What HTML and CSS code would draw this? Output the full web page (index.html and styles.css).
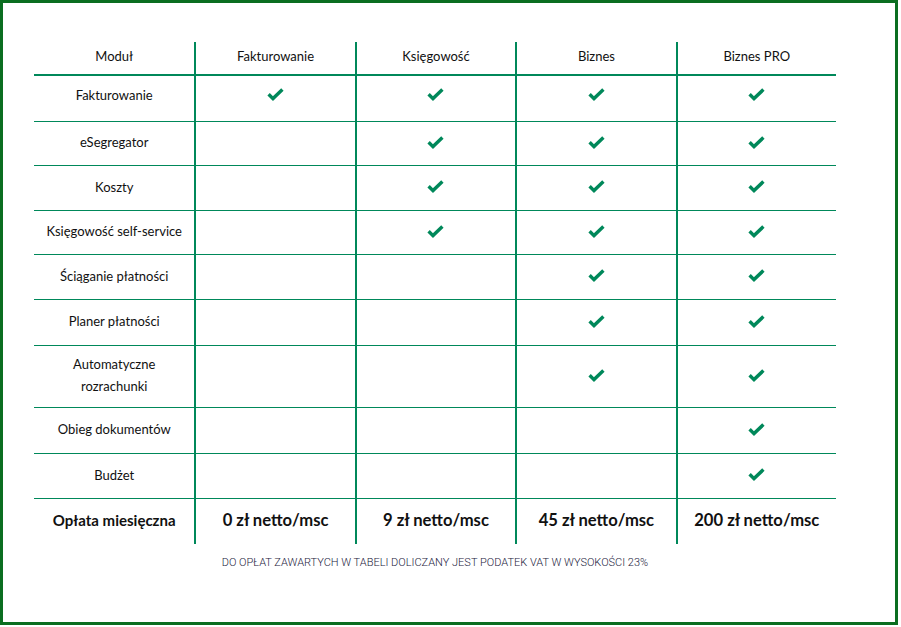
FILE: index.html
```html
<!DOCTYPE html>
<html lang="pl">
<head>
<meta charset="utf-8">
<title>Porównanie pakietów</title>
<link rel="stylesheet" href="styles.css">
</head>
<body>
<div class="frame">
  <div class="grid">
    <div class="cell head">Moduł</div>
    <div class="cell head sep">Fakturowanie</div>
    <div class="cell head sep">Księgowość</div>
    <div class="cell head sep">Biznes</div>
    <div class="cell head sep">Biznes PRO</div>

    <div class="cell r1">Fakturowanie</div>
    <div class="cell r1 sep"><svg class="ck" viewBox="0 0 17 13"><polyline points="1.6,6.2 6,10.6 15.4,1.6"/></svg></div>
    <div class="cell r1 sep"><svg class="ck" viewBox="0 0 17 13"><polyline points="1.6,6.2 6,10.6 15.4,1.6"/></svg></div>
    <div class="cell r1 sep"><svg class="ck" viewBox="0 0 17 13"><polyline points="1.6,6.2 6,10.6 15.4,1.6"/></svg></div>
    <div class="cell r1 sep"><svg class="ck" viewBox="0 0 17 13"><polyline points="1.6,6.2 6,10.6 15.4,1.6"/></svg></div>

    <div class="cell">eSegregator</div>
    <div class="cell sep"></div>
    <div class="cell sep"><svg class="ck" viewBox="0 0 17 13"><polyline points="1.6,6.2 6,10.6 15.4,1.6"/></svg></div>
    <div class="cell sep"><svg class="ck" viewBox="0 0 17 13"><polyline points="1.6,6.2 6,10.6 15.4,1.6"/></svg></div>
    <div class="cell sep"><svg class="ck" viewBox="0 0 17 13"><polyline points="1.6,6.2 6,10.6 15.4,1.6"/></svg></div>

    <div class="cell">Koszty</div>
    <div class="cell sep"></div>
    <div class="cell sep"><svg class="ck" viewBox="0 0 17 13"><polyline points="1.6,6.2 6,10.6 15.4,1.6"/></svg></div>
    <div class="cell sep"><svg class="ck" viewBox="0 0 17 13"><polyline points="1.6,6.2 6,10.6 15.4,1.6"/></svg></div>
    <div class="cell sep"><svg class="ck" viewBox="0 0 17 13"><polyline points="1.6,6.2 6,10.6 15.4,1.6"/></svg></div>

    <div class="cell">Księgowość self-service</div>
    <div class="cell sep"></div>
    <div class="cell sep"><svg class="ck" viewBox="0 0 17 13"><polyline points="1.6,6.2 6,10.6 15.4,1.6"/></svg></div>
    <div class="cell sep"><svg class="ck" viewBox="0 0 17 13"><polyline points="1.6,6.2 6,10.6 15.4,1.6"/></svg></div>
    <div class="cell sep"><svg class="ck" viewBox="0 0 17 13"><polyline points="1.6,6.2 6,10.6 15.4,1.6"/></svg></div>

    <div class="cell">Ściąganie płatności</div>
    <div class="cell sep"></div>
    <div class="cell sep"></div>
    <div class="cell sep"><svg class="ck" viewBox="0 0 17 13"><polyline points="1.6,6.2 6,10.6 15.4,1.6"/></svg></div>
    <div class="cell sep"><svg class="ck" viewBox="0 0 17 13"><polyline points="1.6,6.2 6,10.6 15.4,1.6"/></svg></div>

    <div class="cell">Planer płatności</div>
    <div class="cell sep"></div>
    <div class="cell sep"></div>
    <div class="cell sep"><svg class="ck" viewBox="0 0 17 13"><polyline points="1.6,6.2 6,10.6 15.4,1.6"/></svg></div>
    <div class="cell sep"><svg class="ck" viewBox="0 0 17 13"><polyline points="1.6,6.2 6,10.6 15.4,1.6"/></svg></div>

    <div class="cell">Automatyczne<br>rozrachunki</div>
    <div class="cell sep"></div>
    <div class="cell sep"></div>
    <div class="cell sep"><svg class="ck" viewBox="0 0 17 13"><polyline points="1.6,6.2 6,10.6 15.4,1.6"/></svg></div>
    <div class="cell sep"><svg class="ck" viewBox="0 0 17 13"><polyline points="1.6,6.2 6,10.6 15.4,1.6"/></svg></div>

    <div class="cell">Obieg dokumentów</div>
    <div class="cell sep"></div>
    <div class="cell sep"></div>
    <div class="cell sep"></div>
    <div class="cell sep"><svg class="ck" viewBox="0 0 17 13"><polyline points="1.6,6.2 6,10.6 15.4,1.6"/></svg></div>

    <div class="cell">Budżet</div>
    <div class="cell sep"></div>
    <div class="cell sep"></div>
    <div class="cell sep"></div>
    <div class="cell sep"><svg class="ck" viewBox="0 0 17 13"><polyline points="1.6,6.2 6,10.6 15.4,1.6"/></svg></div>

    <div class="cell foot">Opłata miesięczna</div>
    <div class="cell foot sep price">0 zł netto/msc</div>
    <div class="cell foot sep price">9 zł netto/msc</div>
    <div class="cell foot sep price">45 zł netto/msc</div>
    <div class="cell foot sep price">200 zł netto/msc</div>
  </div>
  <p class="note">DO OPŁAT ZAWARTYCH W TABELI DOLICZANY JEST PODATEK VAT W WYSOKOŚCI 23%</p>
</div>
</body>
</html>
```

FILE: styles.css
```css
html, body {
  margin: 0;
  padding: 0;
  background: #ffffff;
}

.frame {
  box-sizing: border-box;
  width: 898px;
  height: 625px;
  border: 3px solid #0b6e20;
  padding: 39px 0 0 31px;
  font-family: Lato, "Noto Sans", sans-serif;
  color: #111111;
}

.grid {
  width: 802px;
  display: grid;
  grid-template-columns: repeat(5, 1fr);
  grid-template-rows: 34px 46px 44px 45px 44px 45px 46px 62px 46px 45px 45px;
}

.cell {
  box-sizing: border-box;
  display: flex;
  align-items: center;
  justify-content: center;
  text-align: center;
  font-size: 13px;
  line-height: 22px;
  padding-bottom: 3px;
  border-bottom: 1px solid #00885a;
}

.cell.sep {
  border-left: 2px solid #00885a;
}

.cell.head {
  border-bottom: 2px solid #00885a;
  padding-bottom: 4px;
}

.cell.r1 {
  padding-bottom: 8px;
}

.cell.foot {
  border-bottom: none;
  font-weight: 700;
  font-size: 15px;
  padding-bottom: 4px;
  color: #111111;
}

.cell.price {
  font-size: 16.6px;
}

.ck {
  width: 17px;
  height: 13px;
  fill: none;
  stroke: #00885a;
  stroke-width: 3.4;
  stroke-linecap: butt;
  stroke-linejoin: miter;
}

.note {
  margin: 12px 0 0 0;
  width: 802px;
  text-align: center;
  font-family: Roboto, "Liberation Sans", sans-serif;
  font-weight: 300;
  font-size: 11px;
  line-height: 14px;
  color: #1c2240;
}
```
